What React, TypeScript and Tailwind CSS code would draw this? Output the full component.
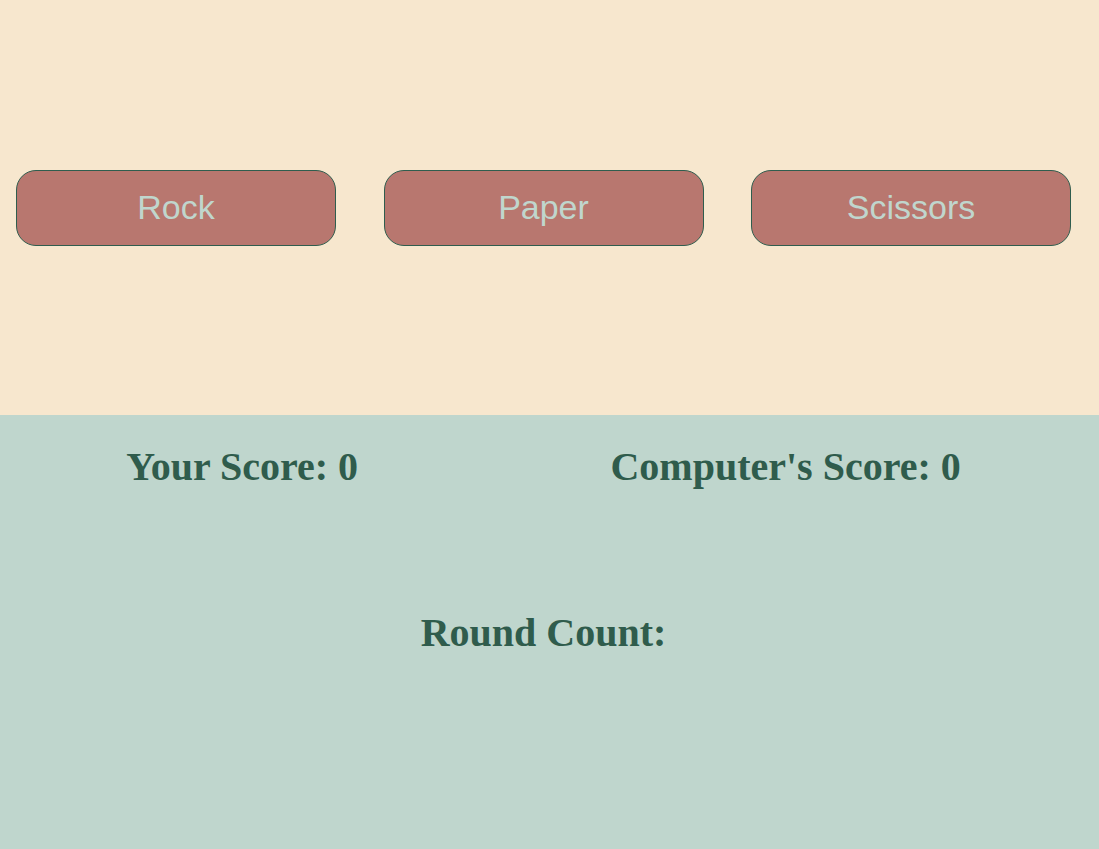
export default function App() {
  const moves = ["Rock", "Paper", "Scissors"];

  return (
    <div className="min-h-screen flex flex-col">
      <div className="h-[415px] bg-[#f7e7ce] flex items-center">
        <div className="w-[1087px] px-4 flex justify-between">
          {moves.map((m) => (
            <button
              key={m}
              className="w-[320px] h-[76px] rounded-[20px] bg-[#b8776f] border border-[#2f5d4e] text-[#c0d6cd] text-[34px] font-['Liberation_Sans',Arial,sans-serif]"
            >
              {m}
            </button>
          ))}
        </div>
      </div>
      <div className="flex-1 bg-[#bfd6cd] pt-[29px] font-['Liberation_Serif','Times_New_Roman',serif] font-bold text-[40px] leading-[46px] text-[#2f5c4c]">
        <div className="w-[1087px] flex justify-around">
          <div>Your Score: 0</div>
          <div>Computer's Score: 0</div>
        </div>
        <div className="w-[1087px] text-center mt-[120px]">Round Count:</div>
      </div>
    </div>
  );
}
